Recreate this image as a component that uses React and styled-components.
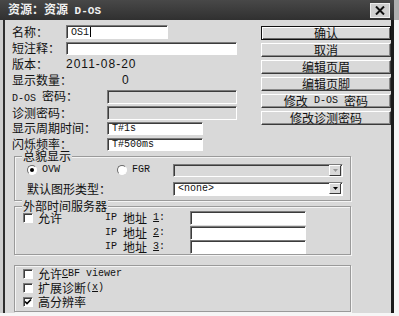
import React from 'react';
import styled, { createGlobalStyle } from 'styled-components';

const Global = createGlobalStyle`
  html, body {
    margin: 0;
    padding: 0;
    background: #f6f6f6;
  }
  body {
    font-family: "Noto Sans CJK SC", "Liberation Sans", sans-serif;
    font-size: 12px;
    color: #111;
  }
`;

const FACE = '#d9d9d9';

const Page = styled.div`
  display: flex;
  align-items: flex-start;
  width: 399px;
  height: 316px;
  overflow: hidden;
`;

const Window = styled.div`
  width: 394px;
  height: 313px;
  flex: none;
  display: flex;
  flex-direction: column;
  background: #cdcdcd;
`;

const Behind = styled.div`
  flex: 1;
  height: 20px;
  background: #b0b0b0;
`;

const TitleBar = styled.div`
  height: 20px;
  flex: none;
  display: flex;
  align-items: center;
  padding: 0 4px 0 8px;
  background: linear-gradient(#484848, #303030);
`;

const Title = styled.div`
  flex: 1;
  color: #f0f0f0;
  font-weight: bold;
  line-height: 14px;
  white-space: nowrap;
`;

const Close = styled.div`
  width: 20px;
  height: 15px;
  box-sizing: border-box;
  border: 1px solid #eee;
  background: #cfcfcf;
  display: flex;
  align-items: center;
  justify-content: center;
`;

const Lt = styled.span`
  font-family: "Liberation Mono", monospace;
  font-size: ${p => p.$size || 10}px;
  font-weight: ${p => (p.$bold ? 'bold' : 'normal')};
  text-decoration: ${p => (p.$u ? 'underline' : 'none')};
  white-space: pre;
`;

const Body = styled.div`
  flex: 1;
  margin-left: 3px;
  border-left: 2px solid #2e2e2e;
  border-right: 3px solid #1b1b1b;
  background: ${FACE};
  padding: 4px 0 0 7px;
  display: flex;
  flex-direction: column;
`;

const Top = styled.div`
  display: flex;
  align-items: flex-start;
`;

const Form = styled.div`
  width: 240px;
  display: flex;
  flex-direction: column;
`;

const Row = styled.div`
  display: flex;
  align-items: center;
  height: ${p => p.$h}px;
`;

const Label = styled.div`
  width: ${p => p.$w}px;
  flex: none;
  white-space: nowrap;
  line-height: 12px;
`;

const Value = styled.div`
  font-family: "Liberation Sans", sans-serif;
  font-size: 12px;
  letter-spacing: ${p => p.$ls || 0}px;
  line-height: 12px;
`;

const Field = styled.div`
  width: ${p => p.$w}px;
  height: ${p => p.$h || 14}px;
  flex: none;
  box-sizing: border-box;
  border: 1px solid;
  border-color: #7a7a7a #fff #fff #7a7a7a;
  box-shadow: inset 1px 1px 0 #3c3c3c;
  background: ${p => (p.$off ? FACE : '#fff')};
  padding-left: 4px;
  display: flex;
  align-items: center;
  line-height: 11px;
`;

const Caret = styled.span`
  display: inline-block;
  width: 1px;
  height: 10px;
  margin-left: 1px;
  background: #000;
`;

const Buttons = styled.div`
  width: 132px;
  margin: 2px 0 0 12px;
  display: flex;
  flex-direction: column;
  gap: 3px;
`;

const Btn = styled.div`
  height: 14px;
  box-sizing: border-box;
  border: 1px solid;
  border-color: ${p => (p.$default ? '#111' : '#fff #3a3a3a #3a3a3a #fff')};
  box-shadow: ${p =>
    p.$default
      ? 'inset 1px 1px 0 #fff, inset -1px -1px 0 #6a6a6a'
      : 'inset -1px -1px 0 #8a8a8a'};
  background: ${FACE};
  display: flex;
  align-items: center;
  justify-content: center;
  line-height: 12px;
  white-space: nowrap;
`;

const Group = styled.fieldset`
  margin: ${p => p.$mt}px 0 0 2px;
  width: 337px;
  box-sizing: border-box;
  padding: ${p => p.$pad};
  border: 1px solid #9a9a9a;
  box-shadow: inset 1px 1px 0 #f4f4f4, 1px 1px 0 #f4f4f4;
  min-inline-size: auto;
`;

const Legend = styled.legend`
  margin-left: 7px;
  padding: 0 1px;
  line-height: 12px;
  background: ${FACE};
`;

const GRow = styled.div`
  display: flex;
  align-items: center;
  height: ${p => p.$h}px;
  margin-top: ${p => p.$mt || 0}px;
  padding-left: ${p => p.$pl}px;
`;

const Cell = styled.div`
  width: ${p => p.$w}px;
  flex: none;
  display: flex;
  align-items: center;
  white-space: nowrap;
  line-height: 12px;
`;

const Radio = styled.span`
  width: 10px;
  height: 10px;
  flex: none;
  box-sizing: border-box;
  border-radius: 50%;
  border: 1px solid;
  border-color: #6a6a6a #fff #fff #6a6a6a;
  background: #fff;
  margin-right: 5px;
  display: flex;
  align-items: center;
  justify-content: center;
`;

const Dot = styled.span`
  width: 4px;
  height: 4px;
  border-radius: 50%;
  background: #000;
`;

const Check = styled.span`
  width: 10px;
  height: 10px;
  flex: none;
  box-sizing: border-box;
  border: 1px solid;
  border-color: #7a7a7a #fff #fff #7a7a7a;
  box-shadow: inset 1px 1px 0 #3c3c3c;
  background: #fff;
  margin-right: 5px;
  display: flex;
  align-items: center;
  justify-content: center;
`;

const Combo = styled(Field)`
  padding-right: 1px;
`;

const Arrow = styled.span`
  margin-left: auto;
  width: 12px;
  height: 11px;
  box-sizing: border-box;
  border: 1px solid;
  border-color: #fff #3a3a3a #3a3a3a #fff;
  background: ${FACE};
  display: flex;
  align-items: center;
  justify-content: center;
`;

const Tri = ({ color }) => (
  <svg width="5" height="3" viewBox="0 0 5 3">
    <path d="M0 0h5L2.5 3z" fill={color} />
  </svg>
);

const Tick = () => (
  <svg width="8" height="8" viewBox="0 0 8 8">
    <path d="M1 3.5l2 2L7 1.5" stroke="#000" strokeWidth="1.6" fill="none" />
  </svg>
);

const formRows = [
  { h: 16, lw: 54, label: '名称：', field: { w: 102, h: 14, text: 'OS1', caret: true } },
  { h: 16, lw: 54, label: '短注释：', field: { w: 171, h: 13 } },
  { h: 15, lw: 54, label: '版本：', value: '2011-08-20', ls: 1 },
  { h: 18, lw: 110, label: '显示数量：', value: '0' },
  { h: 16, lw: 95, label: <><Lt>D-OS </Lt>密码：</>, field: { w: 130, h: 14, off: true } },
  { h: 15, lw: 95, label: '诊测密码：', field: { w: 130, h: 14, off: true } },
  { h: 16, lw: 95, label: '显示周期时间：', field: { w: 96, h: 13, text: 'T#1s' } },
  { h: 16, lw: 95, label: '闪烁频率：', field: { w: 96, h: 13, text: 'T#500ms' } },
];

const buttons = [
  { text: '确认', def: true },
  { text: '取消' },
  { text: '编辑页眉' },
  { text: '编辑页脚' },
  { text: <>修改<Lt> D-OS </Lt>密码</> },
  { text: '修改诊测密码' },
];

const ipRows = [
  { n: '1', h: 15 },
  { n: '2', h: 15 },
  { n: '3', h: 14 },
];

const options = [
  { text: <>允许<Lt><Lt $u>C</Lt>BF viewer</Lt></>, on: false },
  { text: <>扩展诊断<Lt>(<Lt $u>x</Lt>)</Lt></>, on: false },
  { text: '高分辨率', on: true },
];

const App = () => {
  return (
    <>
      <Global />
      <Page>
        <Window>
          <TitleBar>
            <Title>资源：资源<Lt $size={11} $bold> D-OS</Lt></Title>
            <Close>
              <svg width="10" height="9" viewBox="0 0 10 9">
                <path d="M1 0.5l8 8M9 0.5l-8 8" stroke="#111" strokeWidth="2" />
              </svg>
            </Close>
          </TitleBar>
          <Body>
            <Top>
              <Form>
                {formRows.map((r, i) => (
                  <Row key={i} $h={r.h}>
                    <Label $w={r.lw}>{r.label}</Label>
                    {r.value && <Value $ls={r.ls}>{r.value}</Value>}
                    {r.field && (
                      <Field $w={r.field.w} $h={r.field.h} $off={r.field.off}>
                        {r.field.text && <Lt>{r.field.text}</Lt>}
                        {r.field.caret && <Caret />}
                      </Field>
                    )}
                  </Row>
                ))}
              </Form>
              <Buttons>
                {buttons.map((b, i) => (
                  <Btn key={i} $default={b.def}>{b.text}</Btn>
                ))}
              </Buttons>
            </Top>

            <Group $mt={-2} $pad="0 0 1px 0">
              <Legend>总貌显示</Legend>
              <GRow $h={16} $pl={12}>
                <Cell $w={90}>
                  <Radio><Dot /></Radio>
                  <Lt>OVW</Lt>
                </Cell>
                <Cell $w={56}>
                  <Radio />
                  <Lt>FGR</Lt>
                </Cell>
                <Combo $w={170} $h={13} $off>
                  <Arrow><Tri color="#9a9a9a" /></Arrow>
                </Combo>
              </GRow>
              <GRow $h={21} $pl={12}>
                <Cell $w={146}>默认图形类型：</Cell>
                <Combo $w={170} $h={14}>
                  <Lt>&lt;none&gt;</Lt>
                  <Arrow><Tri color="#000" /></Arrow>
                </Combo>
              </GRow>
            </Group>

            <Group $mt={-1} $pad="0">
              <Legend>外部时间服务器</Legend>
              {ipRows.map((r, i) => (
                <GRow key={r.n} $h={r.h} $mt={i === 0 ? -2 : 0} $pl={8}>
                  <Cell $w={82}>
                    {i === 0 && (
                      <>
                        <Check />
                        允许
                      </>
                    )}
                  </Cell>
                  <Cell $w={85}>
                    <Lt>IP </Lt>地址<Lt> <Lt $u>{r.n}</Lt>:</Lt>
                  </Cell>
                  <Field $w={116} $h={14} />
                </GRow>
              ))}
            </Group>

            <Group $mt={10} $pad="1px 0 2px 0">
              {options.map((o, i) => (
                <GRow key={i} $h={14} $pl={8}>
                  <Cell $w={200}>
                    <Check>{o.on && <Tick />}</Check>
                    {o.text}
                  </Cell>
                </GRow>
              ))}
            </Group>
          </Body>
        </Window>
        <Behind />
      </Page>
    </>
  );
};

export default App;
